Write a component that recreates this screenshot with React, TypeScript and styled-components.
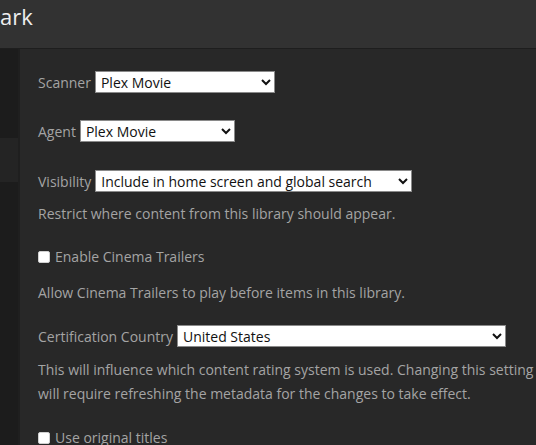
import styled, { createGlobalStyle } from 'styled-components';

const GlobalStyle = createGlobalStyle`
  html, body {
    margin: 0;
    padding: 0;
    background: #282828;
    overflow: hidden;
  }
  body {
    font-family: "Open Sans", "Liberation Sans", sans-serif;
  }
`;

const Page = styled.div`
  width: 536px;
  height: 445px;
  display: flex;
  flex-direction: column;
  overflow: hidden;
  background: #282828;
`;

const Header = styled.div`
  height: 48px;
  flex: none;
  background: #323232;
  border-bottom: 1px solid #1e1e1e;
  display: flex;
  align-items: flex-start;
`;

const Title = styled.h1`
  margin: 0;
  padding-top: 1px;
  font-size: 22px;
  font-weight: 400;
  line-height: 30px;
  color: #eeeeee;
`;

const Body = styled.div`
  flex: 1;
  display: flex;
  min-height: 0;
`;

const Sidebar = styled.div`
  width: 18px;
  flex: none;
  background: #1c1c1c;
  border-right: 2px solid #1f1f1f;
  display: flex;
  flex-direction: column;
`;

const SideItem = styled.div<{ $active?: boolean; $h: number }>`
  height: ${(p) => p.$h}px;
  flex: none;
  background: ${(p) => (p.$active ? '#242424' : 'transparent')};
`;

const Content = styled.div`
  flex: 1;
  padding: 22px 0 0 18px;
  color: #a4a4a4;
  font-size: 14px;
  line-height: 24px;
  white-space: nowrap;
`;

const Field = styled.div<{ $gap: number }>`
  display: flex;
  align-items: baseline;
  height: 22px;
  margin-bottom: ${(p) => p.$gap}px;
`;

const Label = styled.label`
  margin-right: 4px;
  line-height: 22px;
`;

const Select = styled.select<{ $w: number }>`
  box-sizing: border-box;
  width: ${(p) => p.$w}px;
  height: 22px;
  font-family: "Open Sans", "Liberation Sans", sans-serif;
  font-size: 14px;
  color: #111;
  background: #fff;
  border: 1px solid #8a8a8a;
  border-radius: 0;
  padding: 0 0 0 1px;
`;

const Help = styled.p<{ $gap: number }>`
  margin: 0 0 ${(p) => p.$gap}px 0;
`;

const CheckRow = styled.label<{ $gap: number }>`
  display: flex;
  align-items: center;
  height: 24px;
  margin-bottom: ${(p) => p.$gap}px;
`;

const Check = styled.input`
  appearance: none;
  box-sizing: border-box;
  width: 12px;
  height: 12px;
  margin: 0 5px 0 0;
  background: #fff;
  border: 1px solid #d0d0d0;
  border-radius: 2px;
`;

export default function App() {
  return (
    <Page>
      <GlobalStyle />
      <Header>
        <Title>ark</Title>
      </Header>
      <Body>
        <Sidebar>
          <SideItem $h={89} />
          <SideItem $h={44} $active />
          <SideItem $h={10} />
        </Sidebar>
        <Content>
          <Field $gap={27}>
            <Label>Scanner</Label>
            <Select $w={180}>
              <option>Plex Movie</option>
            </Select>
          </Field>
          <Field $gap={28}>
            <Label>Agent</Label>
            <Select $w={155}>
              <option>Plex Movie</option>
            </Select>
          </Field>
          <Field $gap={10}>
            <Label>Visibility</Label>
            <Select $w={317}>
              <option>Include in home screen and global search</option>
            </Select>
          </Field>
          <Help $gap={19}>Restrict where content from this library should appear.</Help>
          <CheckRow $gap={12}>
            <Check type="checkbox" />
            Enable Cinema Trailers
          </CheckRow>
          <Help $gap={20}>Allow Cinema Trailers to play before items in this library.</Help>
          <Field $gap={11}>
            <Label>Certification Country</Label>
            <Select $w={329}>
              <option>United States</option>
            </Select>
          </Field>
          <Help $gap={20}>
            This will influence which content rating system is used. Changing this setting
            <br />
            will require refreshing the metadata for the changes to take effect.
          </Help>
          <CheckRow $gap={0}>
            <Check type="checkbox" />
            Use original titles
          </CheckRow>
        </Content>
      </Body>
    </Page>
  );
}
